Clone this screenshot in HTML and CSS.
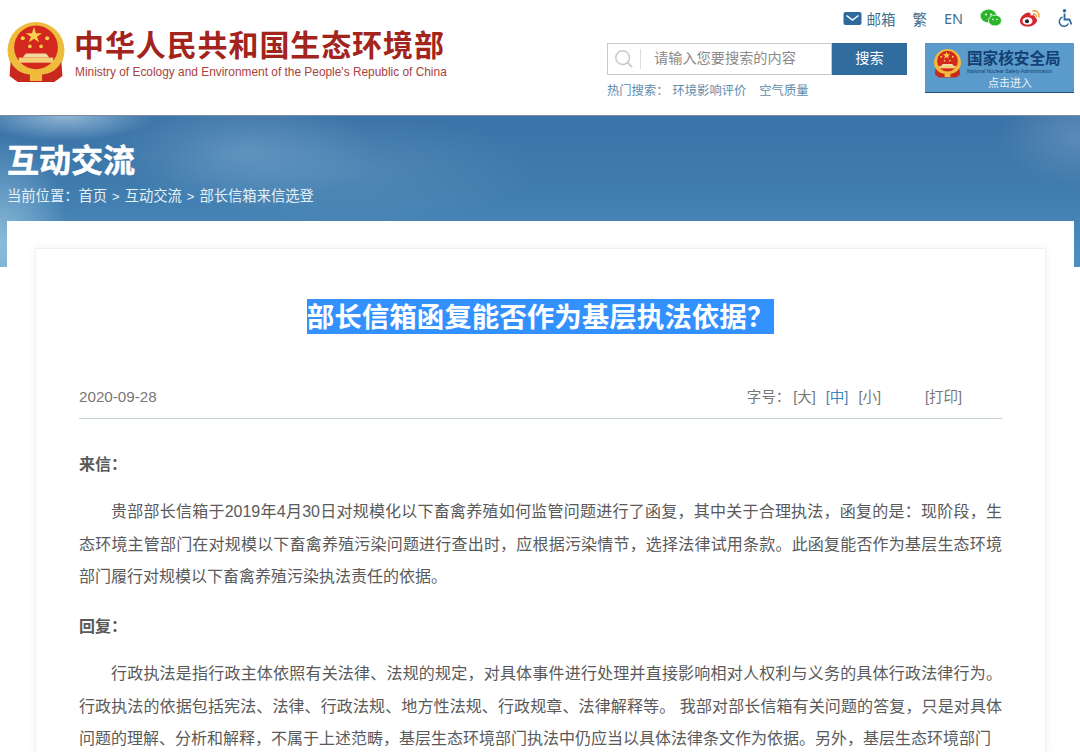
FILE: index.html
```html
<!DOCTYPE html>
<html lang="zh-CN">
<head>
    <meta charset="UTF-8">
    <title>部长信箱函复能否作为基层执法依据？</title>
    <link rel="stylesheet" href="styles.css">
</head>
<body>
    <svg class="defs" width="0" height="0">
        <symbol id="emblem" viewBox="2 1 56 60">
            <circle cx="30" cy="29" r="28" fill="#eebb3c"/>
            <circle cx="30" cy="26" r="21.5" fill="#d4281f"/>
            <polygon points="28,6 30,12 36,12 31,15.5 33,21 28,17.5 23,21 25,15.5 20,12 26,12" fill="#f6d04d"/>
            <circle cx="17" cy="17" r="2" fill="#f6d04d"/>
            <circle cx="41" cy="17" r="2" fill="#f6d04d"/>
            <circle cx="24" cy="25" r="1.8" fill="#f6d04d"/>
            <circle cx="35" cy="25" r="1.8" fill="#f6d04d"/>
            <path d="M20 32h20l3 4H17z" fill="#f2d9a0"/>
            <rect x="13" y="36" width="34" height="5" fill="#f4cf77"/>
            <path d="M5 40c5 10 14 13 25 13s20-3 25-13l1 14-8 6H12l-8-6z" fill="#c9281e"/>
            <path d="M8 40c6 8 14 10 22 10s16-2 22-10" fill="none" stroke="#eebb3c" stroke-width="3"/>
            <rect x="24" y="51" width="12" height="8" fill="#eebb3c"/>
        </symbol>
    </svg>

    <header class="site-header">
        <a class="logo">
            <svg class="logo-emblem"><use href="#emblem"/></svg>
            <div class="logo-text">
                <div class="logo-cn">中华人民共和国生态环境部</div>
                <div class="logo-en">Ministry of Ecology and Environment of the People's Republic of China</div>
            </div>
        </a>
        <div class="header-right">
            <div class="top-links">
                <span class="top-link">
                    <svg class="mail-icon" viewBox="0 0 18 13">
                        <rect width="18" height="13" rx="2" fill="#2f6a9e"/>
                        <path d="M3 3.5l6 4.5 6-4.5" fill="none" stroke="#fff" stroke-width="1.5"/>
                    </svg>邮箱
                </span>
                <span class="top-link">繁</span>
                <span class="top-link en">EN</span>
                <svg class="top-icon" viewBox="0 0 22 18">
                    <ellipse cx="8.5" cy="7" rx="8" ry="6.5" fill="#2bb52b"/>
                    <ellipse cx="15" cy="11.5" rx="6.5" ry="5.5" fill="#2bb52b" stroke="#fff" stroke-width=".8"/>
                    <circle cx="6" cy="5.5" r="1" fill="#fff"/>
                    <circle cx="11" cy="5.5" r="1" fill="#fff"/>
                    <circle cx="13" cy="10.5" r=".8" fill="#fff"/>
                    <circle cx="17" cy="10.5" r=".8" fill="#fff"/>
                </svg>
                <svg class="top-icon" viewBox="0 0 22 18">
                    <path d="M1 12c0-4 5-8.500 8.500-8.500 2 0 2.500 1.500 2 3.200 2-.7 4.500-.7 4.500 1.500 0 .5 2 .7 2 3 0 3-4 6.300-9 6.300S1 15.500 1 12z" fill="#d8262c"/>
                    <ellipse cx="8.500" cy="12" rx="5" ry="3.800" fill="#fff"/>
                    <circle cx="8" cy="12.200" r="2" fill="#222"/>
                    <path d="M14 2c3-.8 6.500 1.500 6 6M14.500 5c1.500-.3 3 .8 2.800 2.500" fill="none" stroke="#ec9a2d" stroke-width="1.400" stroke-linecap="round"/>
                </svg>
                <svg class="top-icon access" viewBox="0 0 16 18">
                    <circle cx="6.500" cy="1.800" r="1.700" fill="#2f6a9e"/>
                    <path d="M6.500 4.500v6h5l2 5" fill="none" stroke="#2f6a9e" stroke-width="1.800"/>
                    <path d="M4.500 8a4.800 4.800 0 1 0 6 6.500" fill="none" stroke="#2f6a9e" stroke-width="1.500"/>
                </svg>
            </div>
            <div class="tools">
                <div class="search-col">
                    <div class="search">
                        <div class="search-input">
                            <svg class="search-icon" viewBox="0 0 22 22">
                                <circle cx="9.500" cy="9.500" r="7.500" fill="none" stroke="#c9c9c9" stroke-width="1.600"/>
                                <path d="M15 15l5 5" stroke="#c9c9c9" stroke-width="2"/>
                            </svg>
                            <span class="search-text">请输入您要搜索的内容</span>
                        </div>
                        <div class="search-btn">搜索</div>
                    </div>
                    <div class="hot">
                        <span class="hot-label">热门搜索：</span><span class="hot-item">环境影响评价</span><span class="hot-item">空气质量</span>
                    </div>
                </div>
                <div class="nsa">
                    <svg class="nsa-emblem"><use href="#emblem"/></svg>
                    <div class="nsa-text">
                        <div class="nsa-cn">国家核安全局</div>
                        <div class="nsa-en">National Nuclear Safety Administration</div>
                        <div class="nsa-enter">点击进入</div>
                    </div>
                </div>
            </div>
        </div>
    </header>

    <section class="banner">
        <h1>互动交流</h1>
        <div class="crumb">当前位置：首页<span class="crumb-sep">&gt;</span>互动交流<span class="crumb-sep">&gt;</span>部长信箱来信选登</div>
    </section>

    <div class="wrap">
        <article class="card">
            <h2 class="title"><span class="title-sel">部长信箱函复能否作为基层执法依据？</span></h2>
            <div class="meta">
                <span class="date">2020-09-28</span>
                <div class="meta-tools">
                    <span class="size-label">字号：</span>
                    <span>[大]</span>
                    <span class="on">[中]</span>
                    <span>[小]</span>
                    <span class="print">[打印]</span>
                </div>
            </div>
            <div class="content">
                <p class="label">来信：</p>
                <p class="para">贵部部长信箱于2019年4月30日对规模化以下畜禽养殖如何监管问题进行了函复，其中关于合理执法，函复的是：现阶段，生态环境主管部门在对规模以下畜禽养殖污染问题进行查出时，应根据污染情节，选择法律试用条款。此函复能否作为基层生态环境部门履行对规模以下畜禽养殖污染执法责任的依据。</p>
                <p class="label">回复：</p>
                <p class="para">行政执法是指行政主体依照有关法律、法规的规定，对具体事件进行处理并直接影响相对人权利与义务的具体行政法律行为。行政执法的依据包括宪法、法律、行政法规、地方性法规、行政规章、法律解释等。 我部对部长信箱有关问题的答复，只是对具体问题的理解、分析和解释，不属于上述范畴，基层生态环境部门执法中仍应当以具体法律条文作为依据。另外，基层生态环境部门</p>
            </div>
        </article>
    </div>
</body>
</html>
```

FILE: styles.css
```css
/* page */
html, body {
    height: 752px;
    overflow: hidden;
}
body {
    margin: 0;
    background: #fff;
    font-family: "Liberation Sans", "Noto Sans CJK SC", sans-serif;
    color: #555;
}
.defs {
    position: absolute;
}

/* header */
.site-header {
    height: 115px;
    box-sizing: border-box;
    display: flex;
    justify-content: space-between;
    padding: 0 6px 0 7px;
}
.logo {
    display: flex;
    align-items: flex-start;
    padding-top: 22px;
}
.logo-emblem {
    width: 58px;
    height: 61px;
}
.logo-text {
    margin-left: 9px;
    padding-top: 6px;
}
.logo-cn {
    font-size: 30px;
    line-height: 36px;
    font-weight: 700;
    letter-spacing: 0.9px;
    color: #a3241c;
    white-space: nowrap;
}
.logo-en {
    margin-top: 1px;
    margin-left: 1px;
    font-size: 11.9px;
    line-height: 15px;
    color: #a8423c;
    white-space: nowrap;
}
.header-right {
    width: 467px;
}
.top-links {
    height: 43px;
    display: flex;
    justify-content: flex-end;
    align-items: center;
    padding: 0 0 7px;
    box-sizing: border-box;
    gap: 17px;
    font-size: 14.5px;
    color: #41708f;
}
.top-link {
    display: flex;
    align-items: center;
}
.top-link.en {
    font-family: "Noto Sans", sans-serif;
}
.mail-icon {
    width: 19px;
    height: 13px;
    margin-right: 4px;
}
.top-icon {
    width: 22px;
    height: 18px;
}
.top-icon.access {
    width: 16px;
}
.tools {
    display: flex;
    justify-content: space-between;
}
.search-col {
    width: 300px;
}
.search {
    display: flex;
    height: 32px;
}
.search-input {
    width: 225px;
    box-sizing: border-box;
    border: 1px solid #c4cbd0;
    display: flex;
    align-items: center;
    font-size: 14.2px;
    color: #8a8a8a;
}
.search-icon {
    width: 20px;
    height: 20px;
    margin-left: 6px;
    padding-right: 6px;
    border-right: 1px solid #ddd;
    box-sizing: content-box;
}
.search-text {
    margin-left: 13px;
    margin-bottom: 4px;
}
.search-btn {
    width: 75px;
    background: #316c9e;
    color: #fff;
    font-size: 14.2px;
    line-height: 30px;
    text-align: center;
}
.hot {
    margin-top: 7px;
    font-size: 12.3px;
    line-height: 18px;
    color: #5f8cab;
}
.hot-label {
    margin-right: 4px;
}
.hot-item {
    margin-right: 13px;
}
.nsa {
    width: 149px;
    height: 50px;
    box-sizing: border-box;
    background: #5a9bcb;
    border-bottom: 1px solid #1e4f80;
    position: relative;
    padding: 6px 0 0 42px;
}
.nsa-emblem {
    position: absolute;
    left: 9px;
    top: 6px;
    width: 27px;
    height: 29px;
}
.nsa-cn {
    font-size: 15.6px;
    line-height: 19px;
    font-weight: 700;
    color: #123f74;
    white-space: nowrap;
}
.nsa-en {
    font-size: 5px;
    line-height: 6px;
    color: #123f74;
    white-space: nowrap;
}
.nsa-enter {
    font-size: 11px;
    line-height: 14px;
    color: #e8f3fa;
    margin: 2px 0 0 21px;
}

/* banner */
.banner {
    height: 152px;
    box-sizing: border-box;
    padding: 27px 7px 0;
    color: #fff;
    border-top: 1px solid #7f8c99;
    background:
        radial-gradient(ellipse 130px 55px at 245px 35px, rgba(160, 200, 225, .3), transparent),
        radial-gradient(ellipse 90px 25px at 65px 0, rgba(200, 225, 240, .6), transparent),
        radial-gradient(ellipse 190px 55px at 350px 55px, rgba(140, 185, 215, .22), transparent),
        radial-gradient(ellipse 70px 110px at 0 130px, rgba(175, 215, 235, .65), transparent),
        radial-gradient(ellipse 80px 50px at 1080px 20px, rgba(140, 170, 205, .4), transparent),
        linear-gradient(#3b73a8, #3f7bad 45%, #4f8fbf);
}
.banner h1 {
    margin: 0;
    font-size: 32px;
    line-height: 36px;
    font-weight: 700;
    -webkit-text-stroke: .5px #fff;
    white-space: nowrap;
}
.crumb {
    margin-top: 7px;
    font-size: 14.3px;
    line-height: 20px;
    color: #e4f0f8;
}
.crumb-sep {
    margin: 0 5px;
    font-size: 13px;
}

/* article */
.wrap {
    margin: -46px 6px 0 7px;
    padding: 27px 28px 0;
    background: #fff;
    position: relative;
}
.card {
    background: #fff;
    border: 1px solid #f0f0f0;
    box-shadow: 0 0 8px rgba(0, 0, 0, .06);
    padding: 50px 43px 0;
}
.title {
    margin: 0;
    text-align: center;
    font-size: 27.5px;
    line-height: 33px;
    font-weight: 700;
    color: #fff;
}
.title-sel {
    display: inline-block;
    padding-top: 2px;
    background: #3390ff;
}
.meta {
    margin-top: 51px;
    height: 33px;
    border-bottom: 1px solid #c5d3d8;
    display: flex;
    justify-content: space-between;
    align-items: flex-start;
    font-size: 14.5px;
    line-height: 24px;
    color: #777;
}
.date {
    font-size: 15.2px;
}
.meta-tools {
    display: flex;
    gap: 10px;
    padding-right: 40px;
}
.size-label {
    margin-right: -7px;
}
.on {
    color: #3a87b8;
}
.print {
    margin-left: 34px;
}
.content {
    padding-top: 12px;
    font-size: 16px;
    line-height: 32.3px;
    color: #5a5a5a;
}
.label {
    margin: 18px 0 0;
    font-weight: 700;
}
.para {
    margin: 15px 0 0;
    text-indent: 32px;
    text-align: justify;
}
```
